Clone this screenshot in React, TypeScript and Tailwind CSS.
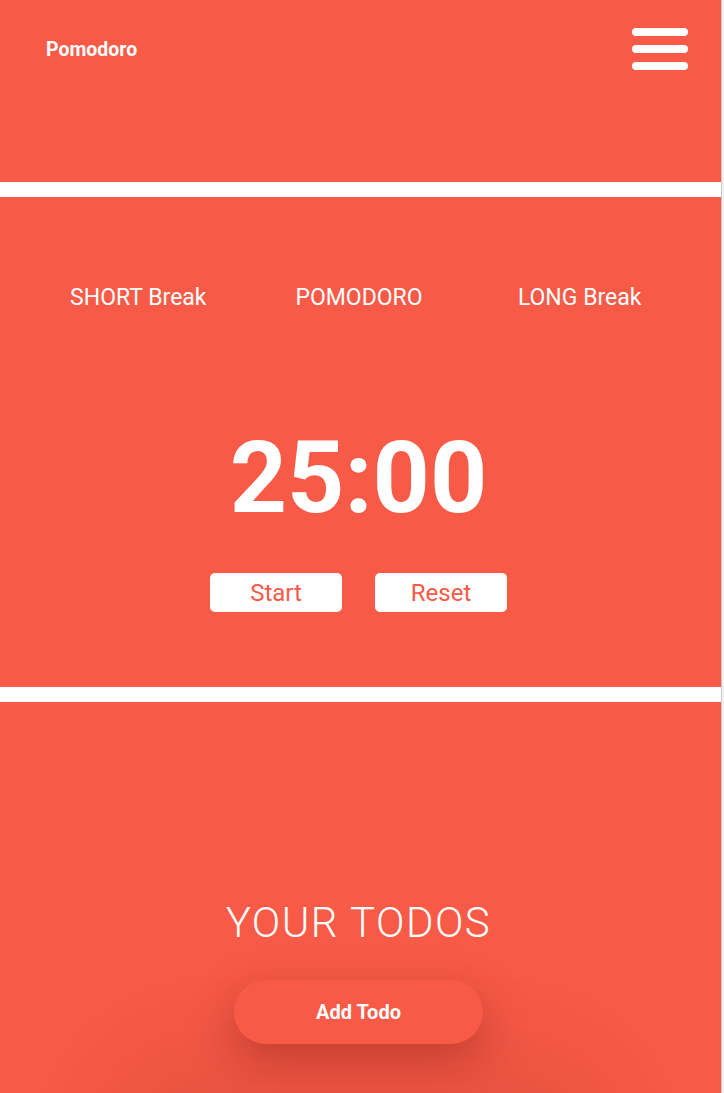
export default function App() {
  return (
    <div className="flex w-full bg-white" style={{ fontFamily: 'Roboto, "Liberation Sans", sans-serif' }}>
      <main className="flex-1 flex flex-col gap-[15px]">
        <header className="h-[182px] bg-[#f75a47] flex items-start justify-between pl-[46px] pr-[33px] pt-[28px]">
          <span className="mt-[11px] text-[19.5px] leading-[21px] font-bold text-white">Pomodoro</span>
          <button className="flex flex-col gap-[9px]" aria-label="menu">
            <span className="block w-[56px] h-[8px] rounded-[4px] bg-white"></span>
            <span className="block w-[56px] h-[8px] rounded-[4px] bg-white"></span>
            <span className="block w-[56px] h-[8px] rounded-[4px] bg-white"></span>
          </button>
        </header>

        <section className="h-[490px] bg-[#f75a47] flex flex-col pt-[88px]">
          <div className="grid grid-cols-3 w-[662px] ml-[28px] text-center text-white text-[23px] leading-[26px]">
            <span>SHORT Break</span>
            <span>POMODORO</span>
            <span>LONG Break</span>
          </div>
          <div className="mt-[117px] pr-[4px] text-center text-white text-[100px] leading-[100px] font-bold">25:00</div>
          <div className="mt-[45px] pr-[4px] flex justify-center gap-[33px]">
            <button className="w-[132px] h-[39px] rounded-[5px] bg-white text-[#f75a47] text-[24px] leading-[28px]">Start</button>
            <button className="w-[132px] h-[39px] rounded-[5px] bg-white text-[#f75a47] text-[24px] leading-[28px]">Reset</button>
          </div>
        </section>

        <section className="h-[391px] bg-[#f75a47] flex flex-col items-center pt-[196px] pr-[4px]">
          <h2 className="text-white text-[42px] leading-[50px] font-light tracking-[1.5px]">YOUR TODOS</h2>
          <button className="mt-[32px] w-[249px] h-[64px] rounded-full bg-[#f75a47] text-white text-[20px] font-bold shadow-[0_16px_45px_rgba(110,20,10,0.35),0_200px_80px_140px_rgba(90,15,5,0.08)]">
            Add Todo
          </button>
        </section>
      </main>
      <div className="w-[3px] bg-[#f1f1f1] border-l border-[#c8c8c8]"></div>
    </div>
  );
}
